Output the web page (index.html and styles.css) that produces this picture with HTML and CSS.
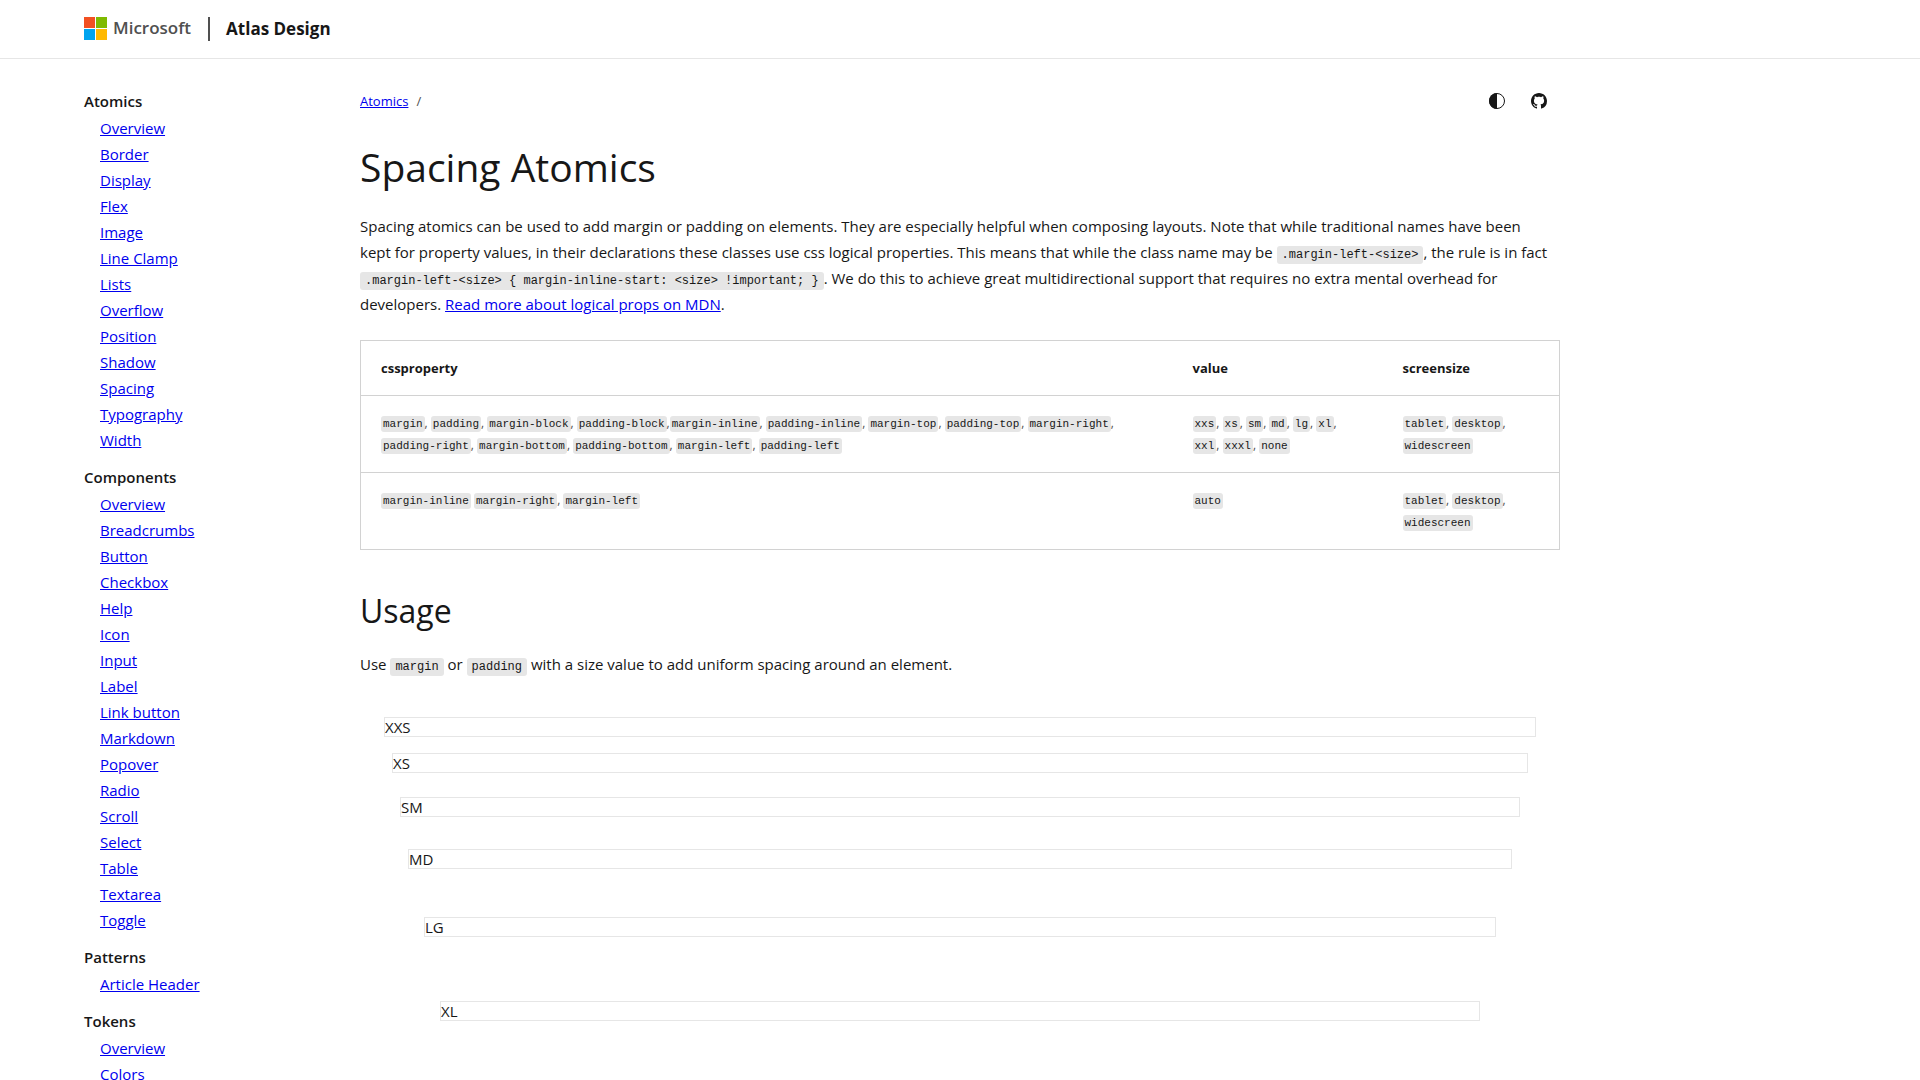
FILE: index.html
```html
<!DOCTYPE html>
<html lang="en">
<head>
<meta charset="utf-8">
<meta name="viewport" content="width=device-width, initial-scale=1">
<title>Spacing Atomics - Atlas Design</title>
<link rel="stylesheet" href="styles.css">
</head>
<body>
<header class="site-header">
  <div class="brand">
    <svg class="brand-mark" viewBox="0 0 23 23" aria-hidden="true">
      <path fill="#f25022" d="M0 0h11v11H0z"/><path fill="#7fba00" d="M12 0h11v11H12z"/>
      <path fill="#00a4ef" d="M0 12h11v11H0z"/><path fill="#ffb900" d="M12 12h11v11H12z"/>
    </svg>
    <span class="brand-name">Microsoft</span>
  </div>
  <span class="site-name">Atlas Design</span>
</header>
<div class="page">
  <nav class="sidebar" aria-label="Documentation">
    <section class="nav-group">
      <h2 class="nav-title">Atomics</h2>
      <ul class="nav-list">
        <li><a href="#">Overview</a></li>
        <li><a href="#">Border</a></li>
        <li><a href="#">Display</a></li>
        <li><a href="#">Flex</a></li>
        <li><a href="#">Image</a></li>
        <li><a href="#">Line Clamp</a></li>
        <li><a href="#">Lists</a></li>
        <li><a href="#">Overflow</a></li>
        <li><a href="#">Position</a></li>
        <li><a href="#">Shadow</a></li>
        <li><a href="#">Spacing</a></li>
        <li><a href="#">Typography</a></li>
        <li><a href="#">Width</a></li>
      </ul>
    </section>
    <section class="nav-group">
      <h2 class="nav-title">Components</h2>
      <ul class="nav-list">
        <li><a href="#">Overview</a></li>
        <li><a href="#">Breadcrumbs</a></li>
        <li><a href="#">Button</a></li>
        <li><a href="#">Checkbox</a></li>
        <li><a href="#">Help</a></li>
        <li><a href="#">Icon</a></li>
        <li><a href="#">Input</a></li>
        <li><a href="#">Label</a></li>
        <li><a href="#">Link button</a></li>
        <li><a href="#">Markdown</a></li>
        <li><a href="#">Popover</a></li>
        <li><a href="#">Radio</a></li>
        <li><a href="#">Scroll</a></li>
        <li><a href="#">Select</a></li>
        <li><a href="#">Table</a></li>
        <li><a href="#">Textarea</a></li>
        <li><a href="#">Toggle</a></li>
      </ul>
    </section>
    <section class="nav-group">
      <h2 class="nav-title">Patterns</h2>
      <ul class="nav-list">
        <li><a href="#">Article Header</a></li>
      </ul>
    </section>
    <section class="nav-group">
      <h2 class="nav-title">Tokens</h2>
      <ul class="nav-list">
        <li><a href="#">Overview</a></li>
        <li><a href="#">Colors</a></li>
      </ul>
    </section>
  </nav>
  <main class="content">
    <div class="toolbar">
      <nav class="breadcrumbs" aria-label="Breadcrumb"><a href="#">Atomics</a><span class="slash">/</span></nav>
      <div class="actions">
        <button class="icon-button" type="button" aria-label="Theme">
          <svg viewBox="0 0 16 16" aria-hidden="true"><circle cx="8" cy="8" r="7.5" fill="none" stroke="currentColor"/><path fill="currentColor" d="M8 0a8 8 0 0 0 0 16z"/></svg>
        </button>
        <a class="icon-button" href="#" aria-label="GitHub">
          <svg viewBox="0 0 16 16" aria-hidden="true"><path fill="currentColor" d="M8 0C3.58 0 0 3.58 0 8c0 3.54 2.29 6.53 5.47 7.59.4.07.55-.17.55-.38 0-.19-.01-.82-.01-1.49-2.01.37-2.53-.49-2.69-.94-.09-.23-.48-.94-.82-1.13-.28-.15-.68-.52-.01-.53.63-.01 1.08.58 1.23.82.72 1.21 1.87.87 2.33.66.07-.52.28-.87.51-1.07-1.78-.2-3.64-.89-3.64-3.95 0-.87.31-1.59.82-2.15-.08-.2-.36-1.02.08-2.12 0 0 .67-.21 2.2.82.64-.18 1.32-.27 2-.27s1.36.09 2 .27c1.53-1.04 2.2-.82 2.2-.82.44 1.1.16 1.92.08 2.12.51.56.82 1.27.82 2.15 0 3.07-1.87 3.75-3.65 3.95.29.25.54.73.54 1.48 0 1.07-.01 1.93-.01 2.2 0 .21.15.46.55.38A8.01 8.01 0 0 0 16 8c0-4.42-3.58-8-8-8z"/></svg>
        </a>
      </div>
    </div>
    <h1>Spacing Atomics</h1>
    <p>Spacing atomics can be used to add margin or padding on elements. They are especially helpful when composing layouts. Note that while traditional names have been kept for property values, in their declarations these classes use css logical properties. This means that while the class name may be <code>.margin-left-&lt;size&gt;</code>, the rule is in fact <code>.margin-left-&lt;size&gt; { margin-inline-start: &lt;size&gt; !important; }</code>. We do this to achieve great multidirectional support that requires no extra mental overhead for developers. <a href="#">Read more about logical props on MDN</a>.</p>
    <table class="props">
      <thead>
        <tr><th class="col-property" scope="col">cssproperty</th><th class="col-value" scope="col">value</th><th class="col-screen" scope="col">screensize</th></tr>
      </thead>
      <tbody>
        <tr>
          <td><code>margin</code>, <code>padding</code>, <code>margin-block</code>, <code>padding-block</code>,<code>margin-inline</code>, <code>padding-inline</code>, <code>margin-top</code>, <code>padding-top</code>, <code>margin-right</code>, <code>padding-right</code>, <code>margin-bottom</code>, <code>padding-bottom</code>, <code>margin-left</code>, <code>padding-left</code></td>
          <td><code>xxs</code>, <code>xs</code>, <code>sm</code>, <code>md</code>, <code>lg</code>, <code>xl</code>, <code>xxl</code>, <code>xxxl</code>, <code>none</code></td>
          <td><code>tablet</code>, <code>desktop</code>, <code>widescreen</code></td>
        </tr>
        <tr>
          <td><code>margin-inline</code> <code>margin-right</code>, <code>margin-left</code></td>
          <td><code>auto</code></td>
          <td><code>tablet</code>, <code>desktop</code>, <code>widescreen</code></td>
        </tr>
      </tbody>
    </table>
    <h2 class="section-title">Usage</h2>
    <p>Use <code>margin</code> or <code>padding</code> with a size value to add uniform spacing around an element.</p>
    <div class="example">
      <div class="box margin-xxs">XXS</div>
      <div class="box margin-xs">XS</div>
      <div class="box margin-sm">SM</div>
      <div class="box margin-md">MD</div>
      <div class="box margin-lg">LG</div>
      <div class="box margin-xl">XL</div>
    </div>
  </main>
</div>
</body>
</html>
```
FILE: styles.css
```css
* { box-sizing: border-box; }

html { overflow-x: hidden; scrollbar-width: none; }

body {
  margin: 0;
  background: #fff;
  color: #171717;
  font-family: "Open Sans", "Noto Sans", sans-serif;
  font-size: 15px;
  line-height: 26px;
}

a { color: #0000ee; text-decoration: underline; }

h1, h2, p, ul { margin: 0; padding: 0; }

/* Header */
.site-header {
  display: flex;
  align-items: center;
  padding: 0 84px;
  height: 59px;
  border-bottom: 1px solid #e6e6e6;
}

.brand {
  display: flex;
  align-items: flex-start;
  gap: 6px;
  height: 24px;
  padding-right: 17px;
  border-right: 2px solid #505050;
}

.brand-mark { width: 23px; height: 23px; }

.brand-name {
  color: #505050;
  font-size: 17px;
  font-weight: 600;
  line-height: 22px;
}

.site-name {
  padding-left: 16px;
  font-size: 17px;
  font-weight: 700;
  line-height: 24px;
}

/* Page columns */
.page {
  display: grid;
  grid-template-columns: 276px minmax(0, 1200px);
  padding: 28px 84px;
}

.nav-group { margin-bottom: 10px; }

.nav-title { font-size: 15px; font-weight: 600; line-height: 28px; }

.nav-list { list-style: none; padding-left: 16px; }

/* Article */
.toolbar {
  display: flex;
  align-items: center;
  justify-content: space-between;
  height: 28px;
}

.breadcrumbs { font-size: 13px; }

.slash { padding-left: 8px; color: #505050; }

.actions { display: flex; gap: 16px; padding-right: 8px; }

.icon-button {
  display: flex;
  align-items: center;
  justify-content: center;
  width: 26px;
  height: 26px;
  padding: 0;
  border: 0;
  background: none;
  color: #171717;
}

.icon-button svg { width: 16px; height: 16px; }

h1 { margin-top: 28px; font-size: 39px; font-weight: 400; line-height: 48px; }

p { padding-right: 6px; }

h1 + p { margin-top: 22px; }

code {
  padding: 2px 5px;
  border-radius: 3px;
  background: #e6e6e6;
  font-family: "Liberation Mono", monospace;
  font-size: 12px;
  line-height: 16px;
}

/* Property table */
.props {
  width: 100%;
  margin-top: 23px;
  border: 1px solid #d2d2d2;
  border-collapse: collapse;
  table-layout: fixed;
  font-size: 13px;
  line-height: 22px;
}

.props th, .props td {
  padding: 16px 20px;
  border-bottom: 1px solid #d2d2d2;
  text-align: left;
  vertical-align: top;
}

.props th { font-weight: 700; }

.props td { color: #505050; font-size: 12px; }

.props code { padding: 2px; color: #171717; font-size: 11px; }

.col-value { width: 210px; }

.col-screen { width: 177px; }

.section-title { margin-top: 41px; font-size: 32px; font-weight: 400; line-height: 40px; }

.section-title + p { margin-top: 20px; }

/* Margin samples */
.example { margin-top: 16px; padding: 16px; display: flow-root; }

.box { border: 1px solid #e6e6e6; line-height: 18px; }

.margin-xxs { margin: 8px; }
.margin-xs { margin: 16px; }
.margin-sm { margin: 24px; }
.margin-md { margin: 32px; }
.margin-lg { margin: 48px; }
.margin-xl { margin: 64px; }
```
